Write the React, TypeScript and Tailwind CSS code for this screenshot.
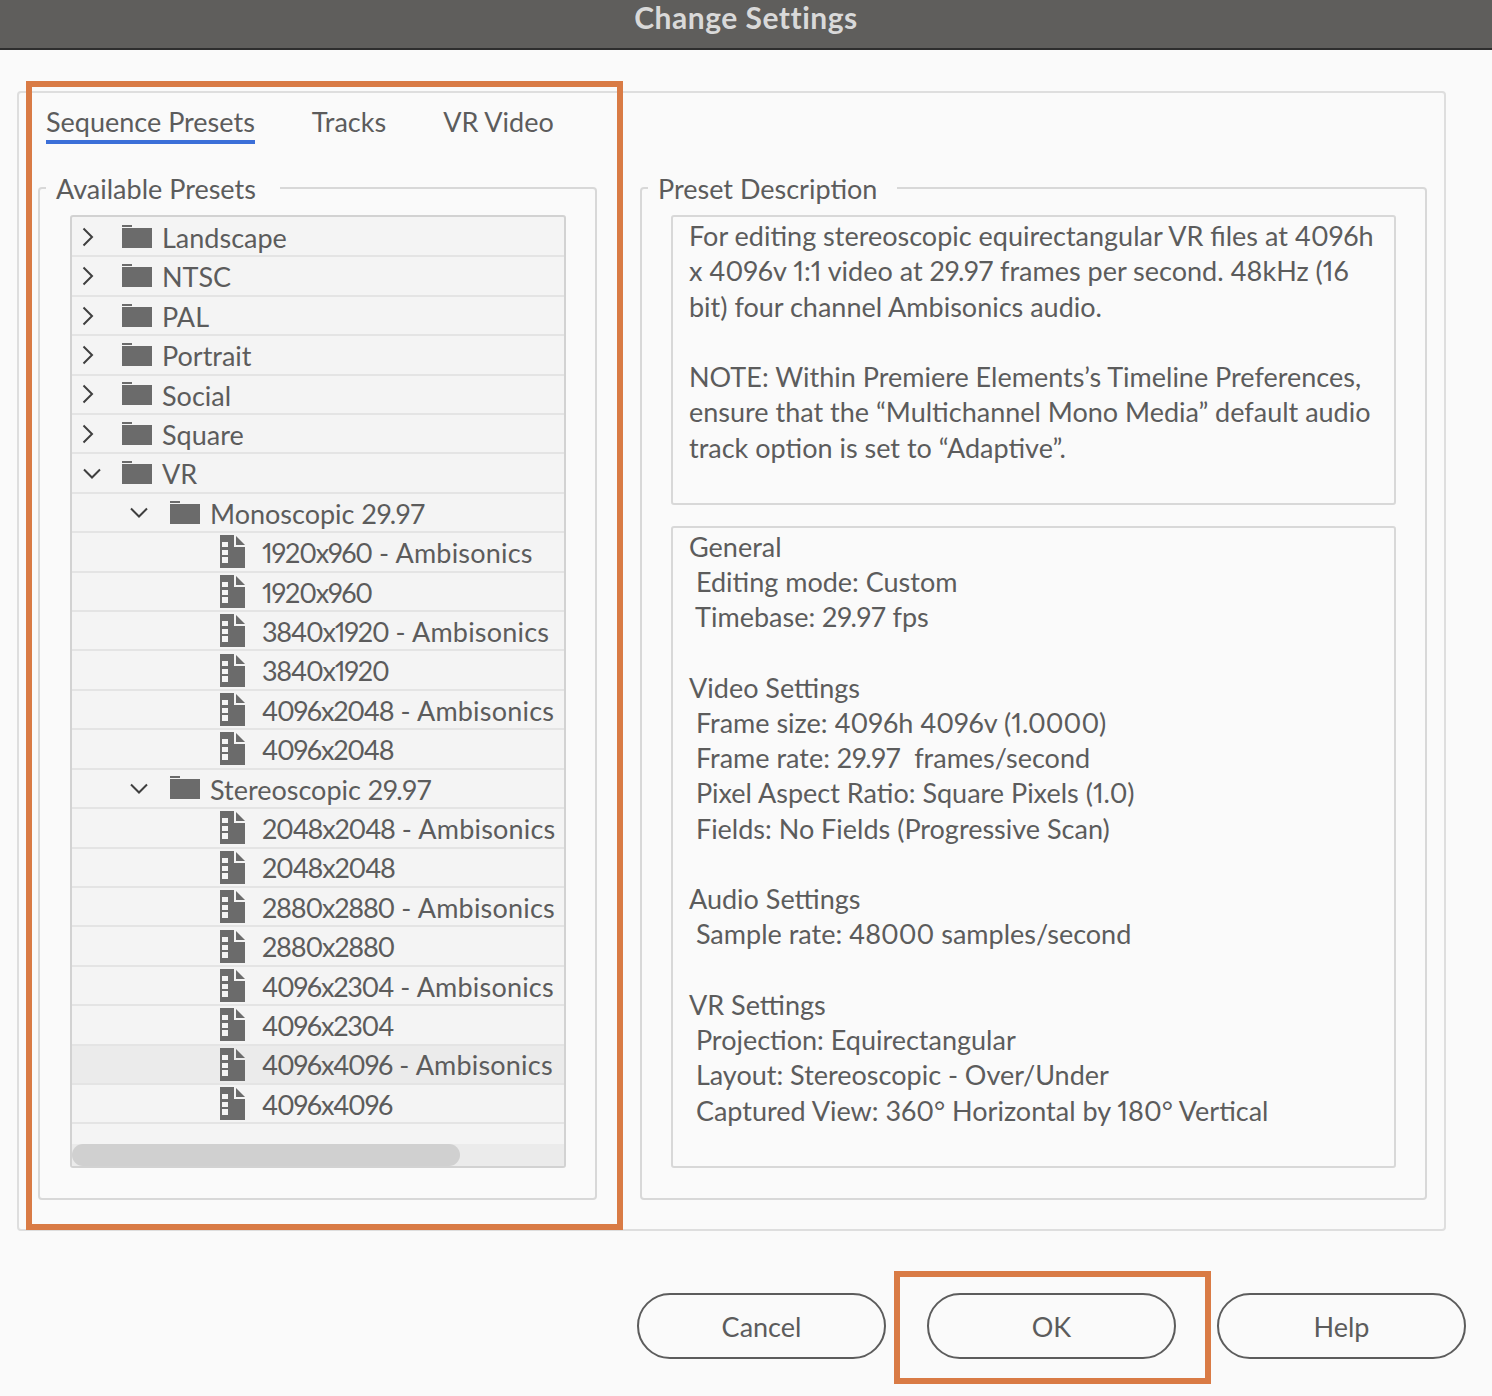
import React from 'react';

type Row = { label: string; kind: 'closed' | 'open' | 'subopen' | 'file'; selected?: boolean };

const rows: Row[] = [
  { label: 'Landscape', kind: 'closed' },
  { label: 'NTSC', kind: 'closed' },
  { label: 'PAL', kind: 'closed' },
  { label: 'Portrait', kind: 'closed' },
  { label: 'Social', kind: 'closed' },
  { label: 'Square', kind: 'closed' },
  { label: 'VR', kind: 'open' },
  { label: 'Monoscopic 29.97', kind: 'subopen' },
  { label: '1920x960 - Ambisonics', kind: 'file' },
  { label: '1920x960', kind: 'file' },
  { label: '3840x1920 - Ambisonics', kind: 'file' },
  { label: '3840x1920', kind: 'file' },
  { label: '4096x2048 - Ambisonics', kind: 'file' },
  { label: '4096x2048', kind: 'file' },
  { label: 'Stereoscopic 29.97', kind: 'subopen' },
  { label: '2048x2048 - Ambisonics', kind: 'file' },
  { label: '2048x2048', kind: 'file' },
  { label: '2880x2880 - Ambisonics', kind: 'file' },
  { label: '2880x2880', kind: 'file' },
  { label: '4096x2304 - Ambisonics', kind: 'file' },
  { label: '4096x2304', kind: 'file' },
  { label: '4096x4096 - Ambisonics', kind: 'file', selected: true },
  { label: '4096x4096', kind: 'file' },
];

const description = [
  'For editing stereoscopic equirectangular VR files at 4096h',
  'x 4096v 1:1 video at 29.97 frames per second. 48kHz (16',
  'bit) four channel Ambisonics audio.',
  '',
  'NOTE: Within Premiere Elements’s Timeline Preferences,',
  'ensure that the “Multichannel Mono Media” default audio',
  'track option is set to “Adaptive”.',
];

const general = [
  'General',
  ' Editing mode: Custom',
  ' Timebase: 29.97 fps',
  '',
  'Video Settings',
  ' Frame size: 4096h 4096v (1.0000)',
  ' Frame rate: 29.97  frames/second',
  ' Pixel Aspect Ratio: Square Pixels (1.0)',
  ' Fields: No Fields (Progressive Scan)',
  '',
  'Audio Settings',
  ' Sample rate: 48000 samples/second',
  '',
  'VR Settings',
  ' Projection: Equirectangular',
  ' Layout: Stereoscopic - Over/Under',
  ' Captured View: 360° Horizontal by 180° Vertical',
];

const Folder = () => (
  <svg width="30" height="24" viewBox="0 0 30 24" className="shrink-0">
    <rect x="0" y="0" width="10" height="2" fill="#6b6b6b" />
    <rect x="0" y="3" width="30" height="20" fill="#6b6b6b" />
  </svg>
);

const FileIcon = () => (
  <svg width="25" height="33" viewBox="0 0 25 33" className="shrink-0">
    <path d="M0 0H14V12H25V33H0Z" fill="#6b6b6b" />
    <path d="M16 1L25 10H16Z" fill="#6b6b6b" />
    <rect x="2" y="7" width="6" height="5" fill="#f4f4f4" />
    <rect x="2" y="15" width="6" height="5" fill="#f4f4f4" />
    <rect x="2" y="22" width="6" height="6" fill="#f4f4f4" />
  </svg>
);

const ChevronRight = () => (
  <svg width="12" height="20" viewBox="0 0 12 20" className="shrink-0">
    <path d="M1.5 1.5L10 10L1.5 18.5" fill="none" stroke="#3f3f3f" strokeWidth="2" />
  </svg>
);

const ChevronDown = () => (
  <svg width="18" height="11" viewBox="0 0 18 11" className="shrink-0">
    <path d="M1 1.5L9 9.5L17 1.5" fill="none" stroke="#3f3f3f" strokeWidth="2" />
  </svg>
);

const TreeRow = ({ row }: { row: Row }) => {
  const bg = row.selected ? 'bg-[#ebebeb]' : 'bg-[#f4f4f4]';
  const [size, rest] = row.label.split(' - ');
  return (
    <div className={`flex h-[39.41px] shrink-0 items-center border-b-2 border-[#e4e4e4] whitespace-nowrap ${bg}`}>
      {row.kind === 'closed' && (
        <div className="flex items-center pl-[10px]">
          <ChevronRight />
          <div className="w-[28px]" />
          <Folder />
          <span className="ml-[10px] pt-[3px]">{row.label}</span>
        </div>
      )}
      {row.kind === 'open' && (
        <div className="flex items-center pl-[11px]">
          <ChevronDown />
          <div className="w-[21px]" />
          <Folder />
          <span className="ml-[10px] pt-[3px]">{row.label}</span>
        </div>
      )}
      {row.kind === 'subopen' && (
        <div className="flex items-center pl-[58px]">
          <ChevronDown />
          <div className="w-[22px]" />
          <Folder />
          <span className="ml-[10px] pt-[3px]">{row.label}</span>
        </div>
      )}
      {row.kind === 'file' && (
        <div className="flex items-center pl-[148px]">
          <FileIcon />
          <span className="ml-[17px] pt-[3px]">
            <span className="tracking-[-1.2px]">{size}</span>
            {rest && <span className="tracking-[0.2px]"> - {rest}</span>}
          </span>
        </div>
      )}
    </div>
  );
};

const TextLines = ({ lines }: { lines: string[] }) => (
  <div className="pl-[16px] leading-[35.25px] whitespace-pre">
    {lines.map((line, i) => (
      <div key={i} className="h-[35.25px]">
        {line}
      </div>
    ))}
  </div>
);

const Button = ({ label }: { label: string }) => (
  <button className="h-[66px] w-[249px] rounded-[33px] border-2 border-[#5c5c5c] pt-[2px] text-[#5c5c5c]">{label}</button>
);

export default function App() {
  return (
    <div className="flex h-[1396px] w-[1492px] flex-col overflow-hidden bg-[#fafafa] font-['Lato',sans-serif] text-[27px] text-[#5c5c5c] proportional-nums">
      {/* Barra de titulo */}
      <div className="flex h-[50px] shrink-0 justify-center border-b-2 border-[#2e2e2e] bg-[#5f5e5c] text-[30px] leading-[35px] font-bold tracking-[0.5px] text-[#d9d9d9]">
        Change Settings
      </div>

      {/* Panel principal */}
      <div className="relative mt-[41px] ml-[17px] flex h-[1140px] w-[1429px] shrink-0 flex-col rounded-[4px] border-2 border-[#dedede] pl-[19px]">
        <div className="flex h-[94px] items-start gap-[57px] pl-[8px] leading-[58px]">
          <div className="h-[51px] border-b-4 border-[#3b6fd8]">Sequence Presets</div>
          <div>Tracks</div>
          <div>VR Video</div>
        </div>

        <div className="flex gap-[43px]">
          {/* Available Presets */}
          <div className="relative h-[1013px] w-[559px] rounded-[4px] border-2 border-[#d8d8d8] pt-[26px] pl-[30px]">
            <div className="absolute -top-[18px] left-[6px] bg-[#fafafa] px-[10px] pr-[24px] leading-[35px]">Available Presets</div>
            <div className="flex h-[953px] w-[496px] flex-col overflow-hidden rounded-[3px] border-2 border-[#d2d2d2] bg-[#f4f4f4] pt-[1px]">
              {rows.map((row) => (
                <TreeRow key={row.label} row={row} />
              ))}
              <div className="h-[20px] shrink-0" />
              <div className="h-[22px] shrink-0 bg-[#ebebeb]">
                <div className="h-full w-[388px] rounded-full bg-[#d0d0d0]" />
              </div>
            </div>
          </div>

          {/* Preset Description */}
          <div className="relative flex h-[1013px] w-[787px] flex-col gap-[21px] rounded-[4px] border-2 border-[#d8d8d8] pt-[26px] pl-[29px]">
            <div className="absolute -top-[18px] left-[6px] bg-[#fafafa] px-[10px] pr-[20px] leading-[35px]">Preset Description</div>
            <div className="h-[290px] w-[725px] rounded-[3px] border-2 border-[#d8d8d8] pt-[1px]">
              <TextLines lines={description} />
            </div>
            <div className="h-[642px] w-[725px] rounded-[3px] border-2 border-[#d8d8d8] pt-[0.5px]">
              <TextLines lines={general} />
            </div>
          </div>
        </div>

        {/* Resaltado naranja */}
        <div className="pointer-events-none absolute -top-[12px] left-[7px] h-[1149px] w-[597px] border-[6px] border-[#d97b45]" />
      </div>

      {/* Botones */}
      <div className="mt-[62px] ml-[637px] flex gap-[41px]">
        <Button label="Cancel" />
        <div className="relative">
          <Button label="OK" />
          <div className="pointer-events-none absolute -top-[22px] -left-[33px] h-[113px] w-[317px] border-[6px] border-[#d97b45]" />
        </div>
        <Button label="Help" />
      </div>
    </div>
  );
}
